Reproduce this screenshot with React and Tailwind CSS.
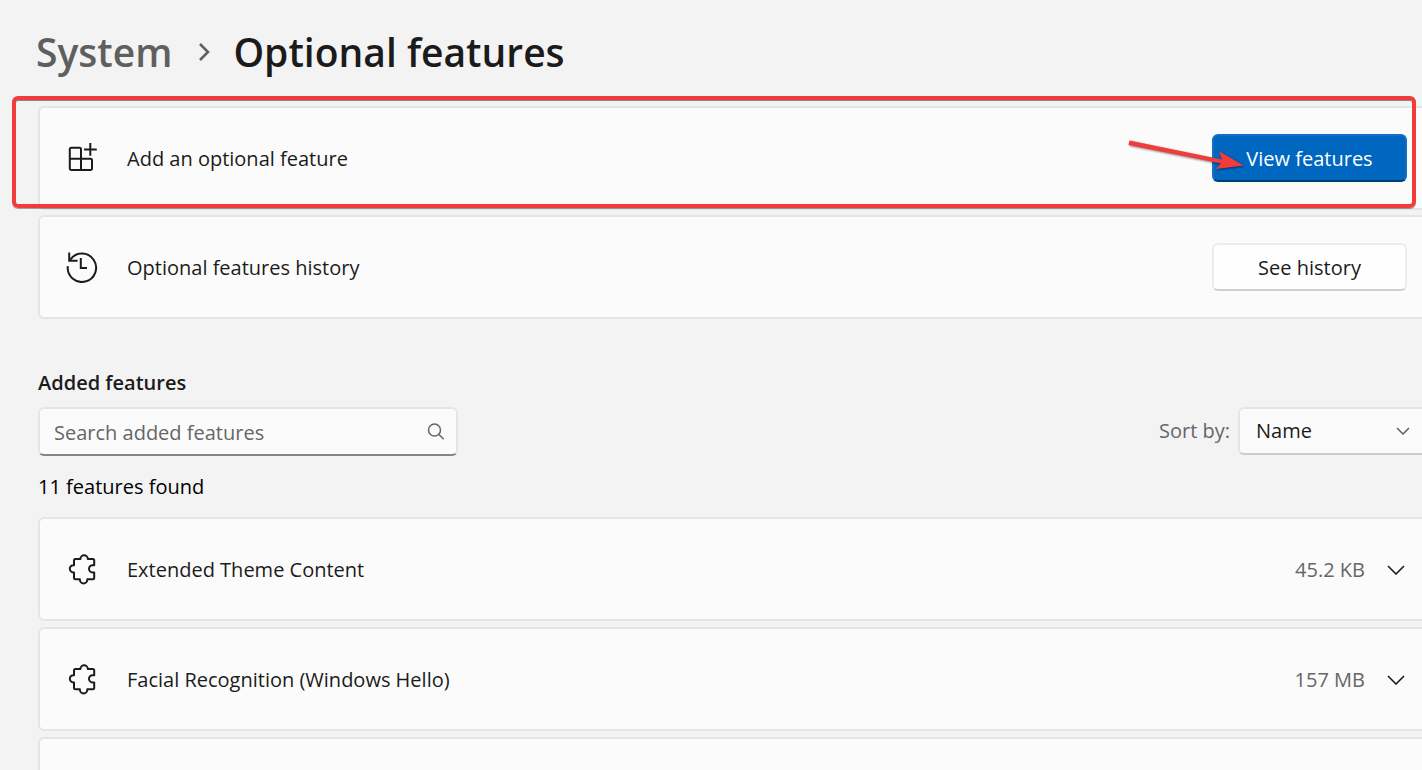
import { useState } from 'react';

const features = [
  { name: 'Extended Theme Content', size: '45.2 KB' },
  { name: 'Facial Recognition (Windows Hello)', size: '157 MB' },
];

const AddIcon = () => (
  <svg width="32" height="32" viewBox="0 0 32 32" fill="none" stroke="currentColor" strokeWidth="2" className="shrink-0">
    <path d="M15 16.7V7.3a1.5 1.5 0 0 0-1.5-1.5H5.3a1.5 1.5 0 0 0-1.5 1.5v19.2A1.5 1.5 0 0 0 5.3 28h19.2a1.5 1.5 0 0 0 1.5-1.5v-8.3a1.5 1.5 0 0 0-1.5-1.5H3.8M15 16.7V28" />
    <path d="M24.3 1v12.8M18 7.4h12.8" />
  </svg>
);

const HistoryIcon = () => (
  <svg width="32" height="32" viewBox="0 0 32 32" fill="none" stroke="currentColor" strokeWidth="2" className="shrink-0">
    <path d="M1.8 15.2A14.2 14.2 0 1 0 4.3 8.6" />
    <path d="M3.2 1.5v8.2h8.4M14.8 7v10H21" />
  </svg>
);

const PuzzleIcon = () => (
  <svg width="32" height="32" viewBox="0 0 32 32" fill="none" stroke="currentColor" strokeWidth="2" strokeLinejoin="round" className="shrink-0">
    <path d="M14.4 6A3.7 3.7 0 0 1 21.8 6h4.9a1.5 1.5 0 0 1 1.5 1.5v4.7h-1.6a3.6 3.6 0 0 0 0 7.2h1.6v5.3a1.5 1.5 0 0 1-1.5 1.5h-5.4v.6a3.7 3.7 0 0 1-7.4 0v-.6H9.5A1.5 1.5 0 0 1 8 24.7v-5.3h-.6a3.6 3.6 0 0 1 0-7.2H8V7.5A1.5 1.5 0 0 1 9.5 6z" />
  </svg>
);

const Chevron = () => (
  <svg width="18" height="10" viewBox="0 0 18 10" fill="none" stroke="currentColor" strokeWidth="1.6">
    <path d="M1 1l8 8 8-8" />
  </svg>
);

const Card = ({ icon, label, children }) => (
  <div className="flex h-[104px] items-center gap-[29px] rounded-l-md border-2 border-r-0 border-[#e5e5e5] bg-[#fbfbfb] pl-[26px]">
    {icon}
    <span className="flex-1 pt-0.5">{label}</span>
    {children}
  </div>
);

// red frame and arrow over the first card
const Highlight = () => (
  <div className="pointer-events-none absolute -top-[10px] bottom-0.5 -left-[26px] right-[6px] rounded-md border-4 border-[#f23b3b] shadow-[0_1px_0_rgba(0,0,0,0.35),inset_0_1px_0_rgba(0,0,0,0.45)]">
    <svg width="124" height="36" viewBox="0 0 124 36" className="absolute right-[163px] top-[38px] drop-shadow-[1px_1px_1px_rgba(0,0,0,0.5)]">
      <path d="M4.5 2.5 97 21.5l-3-8.500 24.500 14.500L91 31l5-5.500L3.500 7z" fill="#f23b3b" />
    </svg>
  </div>
);

export default function App() {
  const [search, setSearch] = useState('');

  return (
    <div className="h-screen overflow-hidden bg-[#f3f3f3] pl-[38px] font-['Open_Sans','Noto_Sans',sans-serif] text-[20px] leading-7 text-[#1b1b1b]">
      <nav className="-ml-0.5 flex items-center pt-[26px] text-[39px] font-semibold leading-[52px]">
        <a href="#system" className="text-[#5f5f5f]">System</a>
        <svg width="12" height="18" viewBox="0 0 12 18" fill="none" stroke="#5f5f5f" strokeWidth="2.5" className="ml-[26px] mr-[23px]">
          <path d="M2 1l8 8-8 8" />
        </svg>
        <h1>Optional features</h1>
      </nav>

      <section className="mt-7 flex flex-col gap-[5px]">
        <div className="relative">
          <Card icon={<AddIcon />} label="Add an optional feature">
            <button className="mr-[15px] h-12 w-[195px] rounded-md border-2 border-[#1470c6] border-b-[#003e73] bg-[#0067c0] pt-0.5 text-white">
              View features
            </button>
          </Card>
          <Highlight />
        </div>
        <Card icon={<HistoryIcon />} label="Optional features history">
          <button className="mr-[15px] h-12 w-[195px] rounded-md border-2 border-[#ececec] border-b-[#d0d0d0] bg-[#fefefe] pt-0.5">
            See history
          </button>
        </Card>
      </section>

      <section className="mt-[50px]">
        <h2 className="font-semibold">Added features</h2>
        <div className="mt-2.5 flex items-start justify-between">
          <div className="relative">
            <input
              type="text"
              aria-label="Search added features"
              placeholder="Search added features"
              value={search}
              onChange={(e) => setSearch(e.target.value)}
              className="block h-[49px] w-[420px] rounded-md border-2 border-[#e5e5e5] border-b-[#868686] bg-[#fbfbfb] pl-[14px] pr-12 pt-0.5 placeholder:text-[#666666] placeholder:opacity-100"
            />
            <svg width="18" height="18" viewBox="0 0 18 18" fill="none" stroke="#666666" strokeWidth="1.5" className="absolute right-[13px] top-4">
              <circle cx="7.5" cy="7" r="6" />
              <path d="M11.7 11.2l5 5" />
            </svg>
          </div>
          <div className="flex items-center gap-2">
            <label htmlFor="sort" className="text-[#666666]">Sort by:</label>
            <div className="relative">
              <select id="sort" className="block h-12 w-[184px] appearance-none rounded-l-md border-2 border-r-0 border-[#e5e5e5] border-b-[#cccccc] bg-[#fbfbfb] pl-4">
                <option>Name</option>
                <option>Size</option>
              </select>
              <svg width="14" height="8" viewBox="0 0 14 8" fill="none" stroke="#5f5f5f" strokeWidth="1.5" className="pointer-events-none absolute right-3 top-5">
                <path d="M1 1l6 6 6-6" />
              </svg>
            </div>
          </div>
        </div>

        <p className="mt-[17px] text-black">11 features found</p>
        <ul className="mt-4 flex flex-col gap-1.5">
          {features.map((f) => (
            <li key={f.name}>
              <Card icon={<PuzzleIcon />} label={f.name}>
                <span className="-mr-[7px] pt-0.5 text-[#666666]">{f.size}</span>
                <button aria-label={`Expand ${f.name}`} className="mr-[17px] pt-0.5">
                  <Chevron />
                </button>
              </Card>
            </li>
          ))}
          <li>
            <Card />
          </li>
        </ul>
      </section>
    </div>
  );
}
